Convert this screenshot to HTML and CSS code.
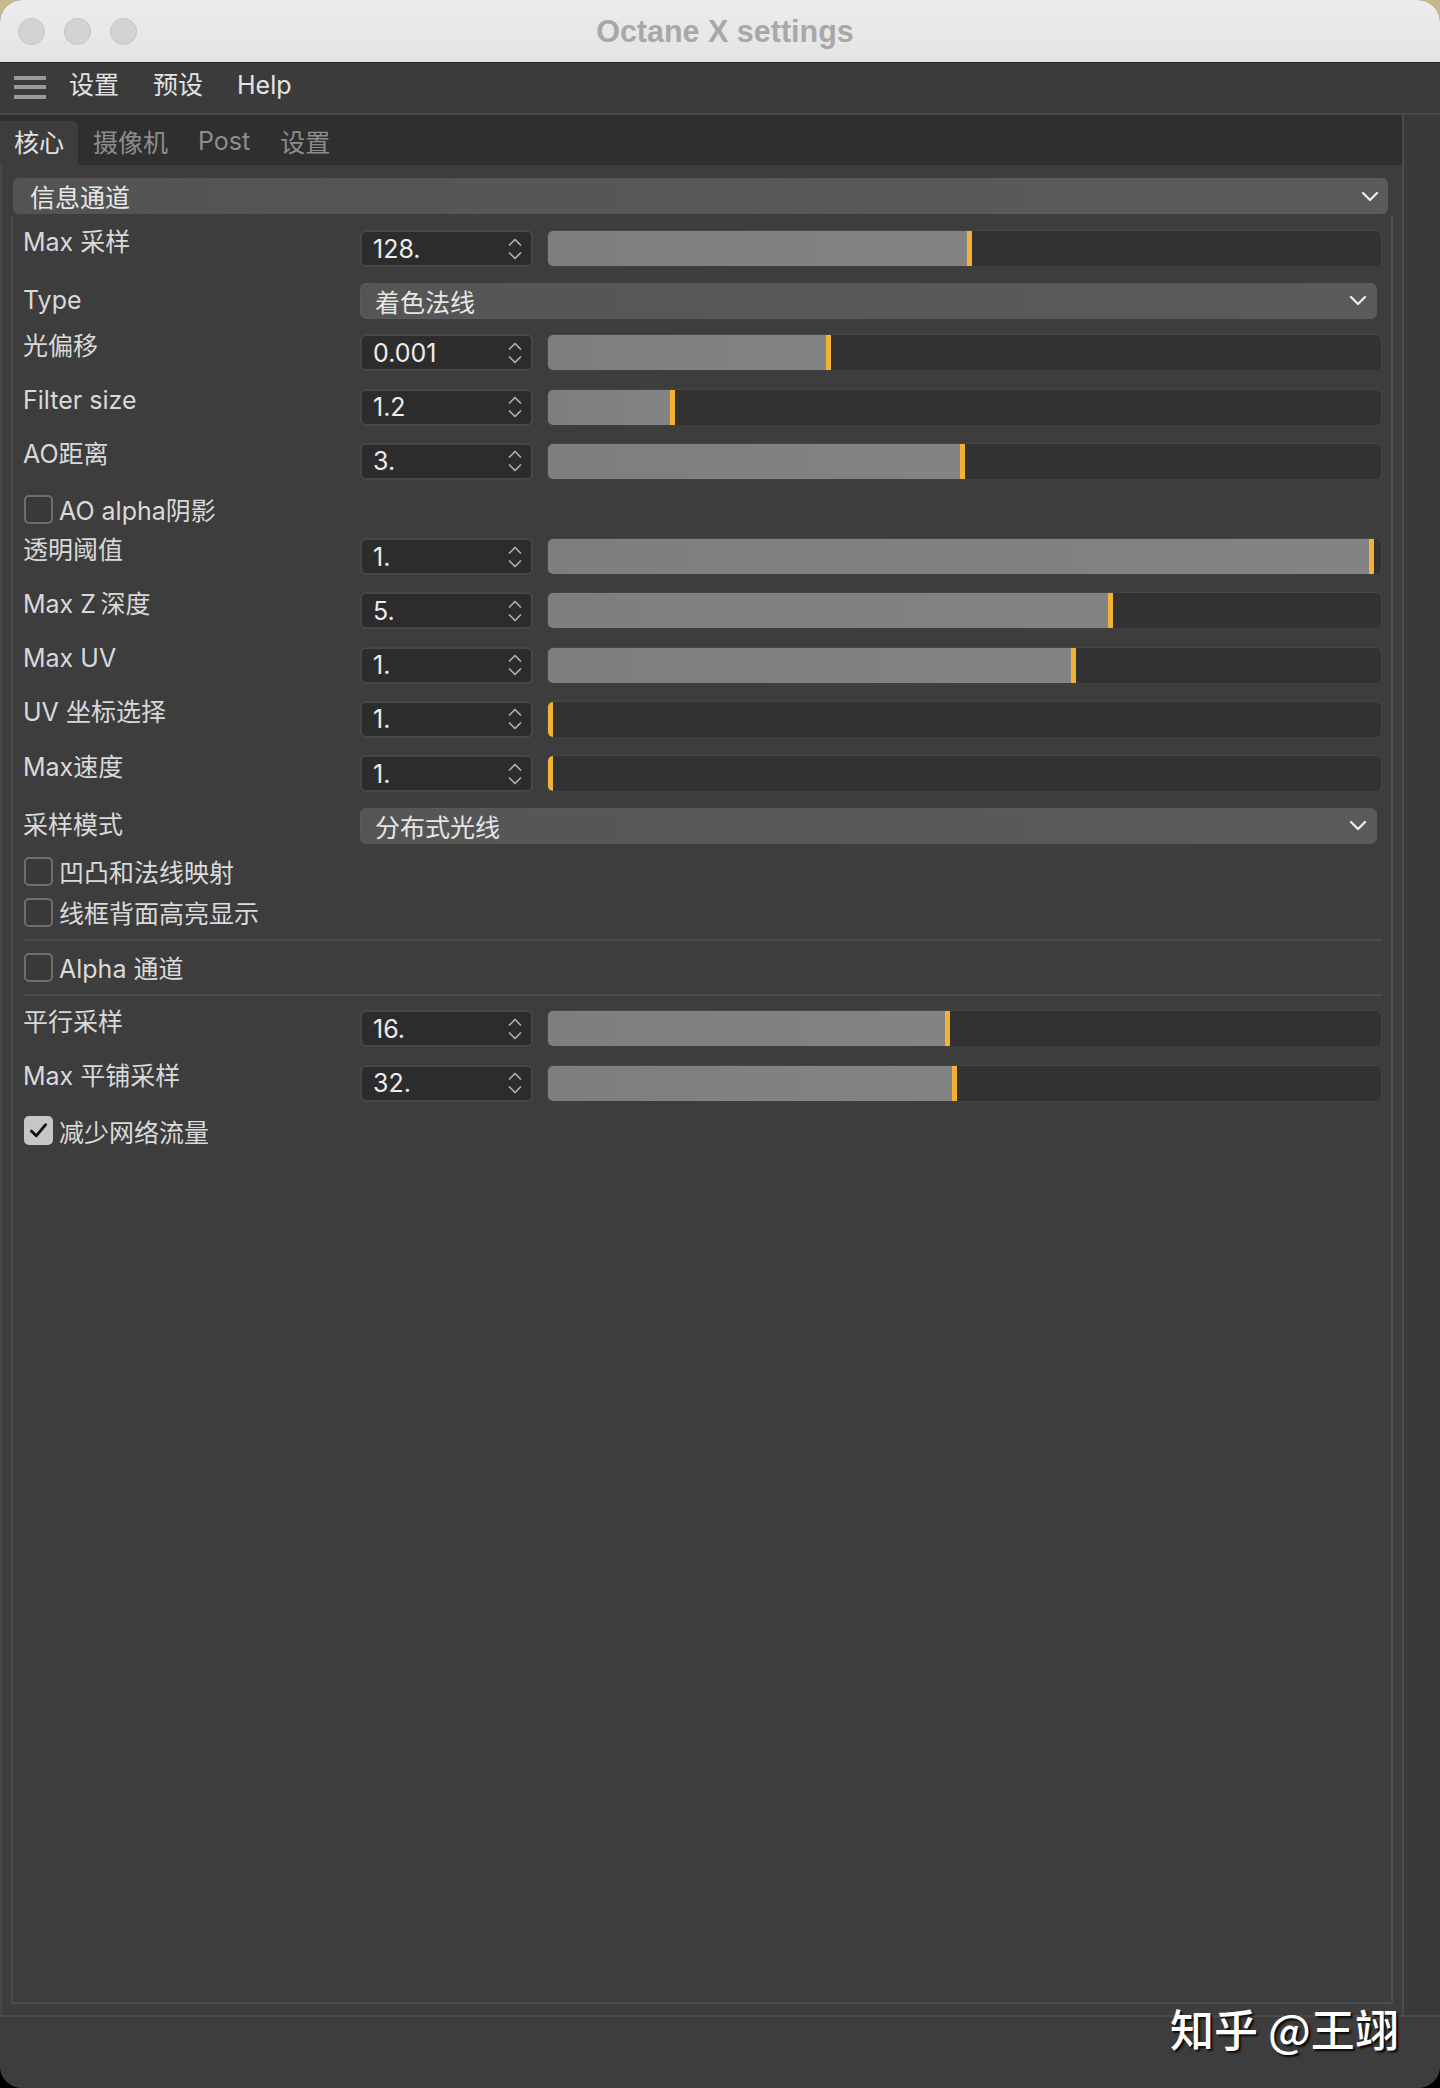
FILE: index.html
```html
<!DOCTYPE html>
<html lang="zh-CN">
<head>
<meta charset="utf-8">
<title>Octane X settings</title>
<link rel="stylesheet" href="styles.css">
</head>
<body>
<div class="window">
  <header class="titlebar">
    <div class="lights"><span class="light"></span><span class="light"></span><span class="light"></span></div>
    <div class="title">Octane X settings</div>
  </header>
  <nav class="menubar">
    <span class="hamburger"><i></i><i></i><i></i></span>
    <span class="menu-item">设置</span>
    <span class="menu-item">预设</span>
    <span class="menu-item">Help</span>
  </nav>
  <div class="main">
    <div class="panel">
      <div class="tabs">
        <span class="tab active">核心</span>
        <span class="tab">摄像机</span>
        <span class="tab">Post</span>
        <span class="tab">设置</span>
      </div>
      <div class="content">
        <div class="section-head">
          <span>信息通道</span>
          <svg class="chev" viewBox="0 0 18 11" width="18" height="11"><path d="M2 2 L9 9 L16 2" /></svg>
        </div>
        <div class="frame">
          <div class="row slider-row">
            <span class="label">Max 采样</span>
            <div class="num"><span>128.</span><svg class="spin" viewBox="0 0 16 26" width="16" height="26"><path d="M2.5 9 L8 3.5 L13.5 9 M2.5 17 L8 22.5 L13.5 17"/></svg></div>
            <div class="slider"><div class="fill" style="width:50.3%"></div><div class="mark"></div></div>
          </div>
          <div class="row dd-row">
            <span class="label">Type</span>
            <div class="dropdown"><span>着色法线</span><svg class="chev" viewBox="0 0 18 11" width="18" height="11"><path d="M2 2 L9 9 L16 2" /></svg></div>
          </div>
          <div class="row slider-row">
            <span class="label">光偏移</span>
            <div class="num"><span>0.001</span><svg class="spin" viewBox="0 0 16 26" width="16" height="26"><path d="M2.5 9 L8 3.5 L13.5 9 M2.5 17 L8 22.5 L13.5 17"/></svg></div>
            <div class="slider"><div class="fill" style="width:33.4%"></div><div class="mark"></div></div>
          </div>
          <div class="row slider-row">
            <span class="label">Filter size</span>
            <div class="num"><span>1.2</span><svg class="spin" viewBox="0 0 16 26" width="16" height="26"><path d="M2.5 9 L8 3.5 L13.5 9 M2.5 17 L8 22.5 L13.5 17"/></svg></div>
            <div class="slider"><div class="fill" style="width:14.6%"></div><div class="mark"></div></div>
          </div>
          <div class="row slider-row">
            <span class="label">AO距离</span>
            <div class="num"><span>3.</span><svg class="spin" viewBox="0 0 16 26" width="16" height="26"><path d="M2.5 9 L8 3.5 L13.5 9 M2.5 17 L8 22.5 L13.5 17"/></svg></div>
            <div class="slider"><div class="fill" style="width:49.4%"></div><div class="mark"></div></div>
          </div>
          <div class="row check-row">
            <span class="box"></span><span class="check-label">AO alpha阴影</span>
          </div>
          <div class="row slider-row">
            <span class="label">透明阈值</span>
            <div class="num"><span>1.</span><svg class="spin" viewBox="0 0 16 26" width="16" height="26"><path d="M2.5 9 L8 3.5 L13.5 9 M2.5 17 L8 22.5 L13.5 17"/></svg></div>
            <div class="slider"><div class="fill" style="width:98.6%"></div><div class="mark"></div></div>
          </div>
          <div class="row slider-row">
            <span class="label">Max Z<span class="thin"> </span>深度</span>
            <div class="num"><span>5.</span><svg class="spin" viewBox="0 0 16 26" width="16" height="26"><path d="M2.5 9 L8 3.5 L13.5 9 M2.5 17 L8 22.5 L13.5 17"/></svg></div>
            <div class="slider"><div class="fill" style="width:67.2%"></div><div class="mark"></div></div>
          </div>
          <div class="row slider-row">
            <span class="label">Max UV</span>
            <div class="num"><span>1.</span><svg class="spin" viewBox="0 0 16 26" width="16" height="26"><path d="M2.5 9 L8 3.5 L13.5 9 M2.5 17 L8 22.5 L13.5 17"/></svg></div>
            <div class="slider"><div class="fill" style="width:62.8%"></div><div class="mark"></div></div>
          </div>
          <div class="row slider-row">
            <span class="label">UV 坐标选择</span>
            <div class="num"><span>1.</span><svg class="spin" viewBox="0 0 16 26" width="16" height="26"><path d="M2.5 9 L8 3.5 L13.5 9 M2.5 17 L8 22.5 L13.5 17"/></svg></div>
            <div class="slider"><div class="fill" style="width:0%"></div><div class="mark"></div></div>
          </div>
          <div class="row slider-row">
            <span class="label">Max速度</span>
            <div class="num"><span>1.</span><svg class="spin" viewBox="0 0 16 26" width="16" height="26"><path d="M2.5 9 L8 3.5 L13.5 9 M2.5 17 L8 22.5 L13.5 17"/></svg></div>
            <div class="slider"><div class="fill" style="width:0%"></div><div class="mark"></div></div>
          </div>
          <div class="row dd-row">
            <span class="label">采样模式</span>
            <div class="dropdown"><span>分布式光线</span><svg class="chev" viewBox="0 0 18 11" width="18" height="11"><path d="M2 2 L9 9 L16 2" /></svg></div>
          </div>
          <div class="row check-row">
            <span class="box"></span><span class="check-label">凹凸和法线映射</span>
          </div>
          <div class="row check-row">
            <span class="box"></span><span class="check-label">线框背面高亮显示</span>
          </div>
          <div class="sep"></div>
          <div class="row check-row">
            <span class="box"></span><span class="check-label">Alpha 通道</span>
          </div>
          <div class="sep"></div>
          <div class="row slider-row">
            <span class="label">平行采样</span>
            <div class="num"><span>16.</span><svg class="spin" viewBox="0 0 16 26" width="16" height="26"><path d="M2.5 9 L8 3.5 L13.5 9 M2.5 17 L8 22.5 L13.5 17"/></svg></div>
            <div class="slider"><div class="fill" style="width:47.7%"></div><div class="mark"></div></div>
          </div>
          <div class="row slider-row">
            <span class="label">Max 平铺采样</span>
            <div class="num"><span>32.</span><svg class="spin" viewBox="0 0 16 26" width="16" height="26"><path d="M2.5 9 L8 3.5 L13.5 9 M2.5 17 L8 22.5 L13.5 17"/></svg></div>
            <div class="slider"><div class="fill" style="width:48.5%"></div><div class="mark"></div></div>
          </div>
          <div class="row check-row">
            <span class="box checked"><svg viewBox="0 0 28 28" width="25" height="25"><path d="M6 14.5 L11.5 20 L22 7.5"/></svg></span><span class="check-label">减少网络流量</span>
          </div>
        </div>
      </div>
    </div>
    <div class="side"></div>
  </div>
  <div class="statusbar"></div>
  <div class="watermark">知乎 @王翊</div>
</div>
</body>
</html>
```

FILE: styles.css
```css
* { box-sizing: border-box; }
html {
  background: linear-gradient(180deg, #c9b78d 0%, #c9b78d 50%, #000 50%, #000 100%);
}
body {
  margin: 0;
  width: 1440px;
  height: 2088px;
  font-family: Inter, "Noto Sans CJK SC", sans-serif;
  font-size: 25px;
  color: #dcdcdc;
}
.window {
  position: relative;
  width: 1440px;
  height: 2088px;
  border-radius: 22px;
  overflow: hidden;
  background: #3d3d3d;
  display: flex;
  flex-direction: column;
}

/* title bar */
.titlebar {
  height: 63px;
  flex: none;
  display: flex;
  align-items: center;
  background: linear-gradient(180deg, #ececec 0%, #e4e4e4 100%);
  border-bottom: 1px solid #222;
  position: relative;
}
.lights {
  display: flex;
  gap: 19px;
  margin-left: 18px;
}
.light {
  width: 27px;
  height: 27px;
  border-radius: 50%;
  background: #d3d3d3;
  border: 1px solid #c2c2c2;
}
.title {
  flex: 1;
  text-align: center;
  margin-right: 127px;
  font-family: "Liberation Sans", Arial, sans-serif;
  font-weight: 700;
  font-size: 30.5px;
  color: #a8a8a8;
}

/* menu bar */
.menubar {
  height: 52px;
  flex: none;
  display: flex;
  align-items: center;
  gap: 34px;
  padding-left: 14px;
  padding-bottom: 6px;
  background: #3b3b3b;
  border-bottom: 2px solid #484848;
  color: #e4e4e4;
}
.hamburger {
  width: 32px;
  display: flex;
  flex-direction: column;
  gap: 5.5px;
  margin-right: -11px;
  margin-top: 4px;
}
.hamburger i {
  display: block;
  height: 4px;
  background: #9a9a9a;
}
.menu-item { line-height: 30px; }

/* main */
.main {
  flex: 1;
  display: flex;
  border-bottom: 2px solid #4a4a4a;
  min-height: 0;
}
.panel {
  width: 1404px;
  flex: none;
  display: flex;
  flex-direction: column;
  border-right: 2px solid #4b4b4b;
}
.side {
  flex: 1;
  background: #3a3a3a;
}
.tabs {
  height: 50px;
  flex: none;
  display: flex;
  align-items: flex-end;
  background: #2f2f2f;
}
.tab {
  height: 44px;
  display: flex;
  align-items: center;
  padding: 0 15px 4px;
  color: #8d8d8d;
}
.tab.active {
  padding: 0 14px 4px;
  background: #3d3d3d;
  color: #e2e2e2;
  border-radius: 0 5px 0 0;
}
.content {
  flex: 1;
  display: flex;
  flex-direction: column;
  padding: 13px 14px 11px 11px;
  border-left: 2px solid #474747;
  background: #3d3d3d;
}
.section-head {
  height: 36px;
  flex: none;
  display: flex;
  align-items: center;
  justify-content: space-between;
  padding: 0 9px 0 17px;
  border-radius: 6px;
  background: linear-gradient(90deg, #535353 0%, #5b5b5b 100%);
  color: #e8e8e8;
  margin-bottom: 2px;
}
.chev path {
  fill: none;
  stroke: #ececec;
  stroke-width: 2.4;
  stroke-linecap: round;
  stroke-linejoin: round;
}
.frame {
  flex: 1;
  margin: 0 -5px 0 -2px;
  border: 2px solid #4c4c4c;
  border-top: none;
  padding: 5.5px 9px 0 10px;
}

/* rows */
.row {
  display: flex;
  align-items: center;
}
.slider-row { height: 54.25px; }
.dd-row { height: 50px; }
.check-row { height: 41px; }
.label {
  width: 337px;
  flex: none;
  line-height: 25px;
  color: #d9d9d9;
}
.thin { font-size: 16px; }
.slider-row .label {
  align-self: flex-start;
  margin-top: 8px;
}
.num {
  width: 173px;
  height: 37px;
  flex: none;
  display: flex;
  align-items: center;
  justify-content: space-between;
  padding: 0 8px 0 11px;
  background: #2c2c2c;
  border: 2px solid #474747;
  border-radius: 6px;
  color: #ececec;
}
.spin path {
  fill: none;
  stroke: #b0b0b0;
  stroke-width: 1.7;
  stroke-linecap: round;
  stroke-linejoin: round;
}
.slider {
  flex: 1;
  height: 37px;
  margin-left: 14px;
  display: flex;
  background: #323232;
  border: 1px solid #474747;
  border-bottom-color: #404040;
  border-radius: 6px;
  overflow: hidden;
}
.fill {
  height: 100%;
  background: linear-gradient(90deg, #7e7e7e, #838383);
}
.mark {
  width: 5px;
  height: 100%;
  flex: none;
  background: #f3b234;
}
.dropdown {
  flex: 1;
  height: 36px;
  margin-right: 5px;
  display: flex;
  align-items: center;
  justify-content: space-between;
  padding: 0 9px 0 14px;
  border-radius: 6px;
  background: linear-gradient(90deg, #555555 0%, #5b5b5b 100%);
  border: 1px solid #5a5a5a;
  color: #e6e6e6;
}
.box {
  width: 29px;
  height: 29px;
  flex: none;
  margin-left: 1px;
  border: 2px solid #6e6e6e;
  border-radius: 5px;
  background: #393939;
  display: flex;
  align-items: center;
  justify-content: center;
}
.box.checked {
  background: #c6c6c6;
  border-color: #c6c6c6;
}
.box.checked path {
  fill: none;
  stroke: #111;
  stroke-width: 3.2;
  stroke-linecap: round;
  stroke-linejoin: round;
}
.check-label {
  margin-left: 6px;
  color: #dadada;
}
.sep {
  height: 14px;
  padding-top: 6px;
  flex: none;
}
.sep::before {
  content: "";
  display: block;
  height: 2px;
  background: #4a4a4a;
}

.statusbar {
  height: 71px;
  flex: none;
  background: #3d3d3d;
}
.watermark {
  position: absolute;
  left: 1170px;
  top: 1996px;
  font-family: "Noto Sans CJK SC", sans-serif;
  font-weight: 500;
  font-size: 44px;
  color: #ffffff;
  text-shadow: 2px 2px 2px rgba(0, 0, 0, 0.85);
}
```
